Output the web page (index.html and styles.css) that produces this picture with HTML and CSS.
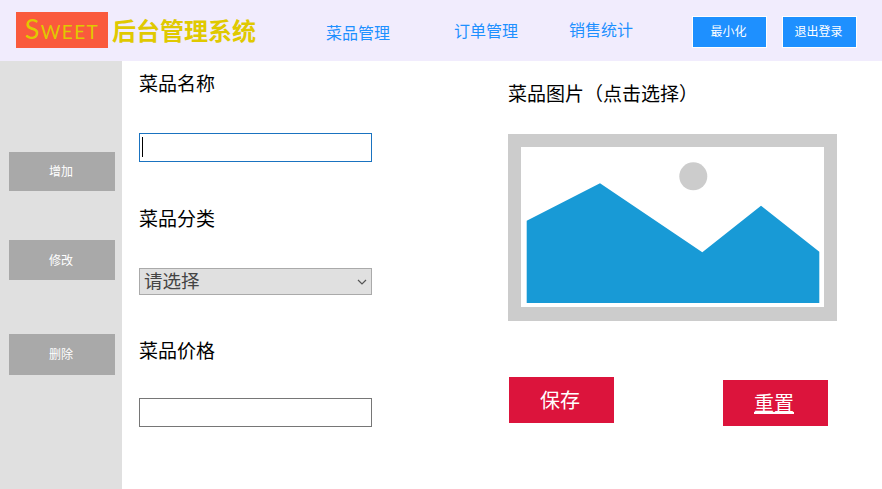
FILE: index.html
```html
<!DOCTYPE html>
<html lang="zh">
<head>
    <meta charset="UTF-8">
    <meta name="viewport" content="width=device-width, initial-scale=1.0">
    <title>后台管理系统</title>
    <link rel="stylesheet" href="styles.css">
</head>
<body>
    <!-- Top bar -->
    <header class="topbar">
        <div class="logo">Sweet</div>
        <div class="system-name">后台管理系统</div>
        <nav class="nav">
            <a class="nav-item nav-item-first" href="#">菜品管理</a>
            <a class="nav-item nav-item-second" href="#">订单管理</a>
            <a class="nav-item nav-item-third" href="#">销售统计</a>
        </nav>
        <div class="top-actions">
            <button class="top-btn">最小化</button>
            <button class="top-btn">退出登录</button>
        </div>
    </header>

    <div class="content">
        <!-- Side menu -->
        <aside class="sidebar">
            <button class="side-btn side-add">增加</button>
            <button class="side-btn side-edit">修改</button>
            <button class="side-btn side-del">删除</button>
        </aside>

        <!-- Dish form -->
        <main class="form-area">
            <section class="fields">
                <div class="field-label label-name">菜品名称</div>
                <div class="input-wrap">
                    <input class="text-input is-focused" type="text">
                    <span class="caret"></span>
                </div>
                <div class="field-label label-type">菜品分类</div>
                <div class="select-wrap">
                    <select class="type-select">
                        <option>请选择</option>
                    </select>
                    <svg class="select-arrow" width="10" height="6" viewBox="0 0 10 6">
                        <polyline points="1,1 5,5 9,1" fill="none" stroke="#555" stroke-width="1.2"/>
                    </svg>
                </div>
                <div class="field-label label-price">菜品价格</div>
                <input class="text-input" type="text">
            </section>

            <section class="picture">
                <div class="field-label picture-label">菜品图片（点击选择）</div>
                <svg class="picture-img" width="329" height="187" viewBox="0 0 329 187">
                    <rect width="329" height="187" fill="#cccccc"/>
                    <rect x="13" y="13" width="303" height="160" fill="#ffffff"/>
                    <circle cx="185.3" cy="42.3" r="14" fill="#cccccc"/>
                    <polygon points="18.7,86.7 92,49.3 194.3,118.3 253,71.7 311.3,117.7 311.3,169 18.7,169" fill="#189ad6"/>
                </svg>
                <div class="picture-actions">
                    <button class="red-btn">保存</button>
                    <a class="red-btn red-link" href="#">重置</a>
                </div>
            </section>
        </main>
    </div>
</body>
</html>
```

FILE: styles.css
```css
* {
    box-sizing: border-box;
}
body {
    margin: 0;
    height: 489px;
    overflow: hidden;
    background: #fff;
    font-family: "Noto Sans CJK SC", "Noto Sans", sans-serif;
}
button {
    font-family: inherit;
    cursor: pointer;
}

/* Top bar */
.topbar {
    display: flex;
    height: 61px;
    background: #f1ecfd;
}
.logo {
    flex-shrink: 0;
    width: 92px;
    height: 36px;
    margin: 12px 0 0 16px;
    background: #fa5a3c;
    color: #e0c900;
    font-family: "Lato", sans-serif;
    font-variant: small-caps;
    font-size: 27px;
    line-height: 34px;
    letter-spacing: 1.4px;
    text-align: center;
}
.system-name {
    margin: 12px 0 0 4px;
    color: #e0c900;
    font-size: 24px;
    font-weight: bold;
    line-height: 35px;
    white-space: nowrap;
}
.nav {
    display: flex;
    margin-left: 70px;
}
.nav-item {
    color: #1e90ff;
    font-size: 16px;
    line-height: 24px;
    text-decoration: none;
    white-space: nowrap;
}
.nav-item-first {
    margin-top: 20px;
}
.nav-item-second {
    margin: 18px 0 0 64px;
}
.nav-item-third {
    margin: 17px 0 0 51px;
}
.top-actions {
    display: flex;
    flex-shrink: 0;
    gap: 15px;
    margin: 16px 0 0 59px;
}
.top-btn {
    flex-shrink: 0;
    width: 75px;
    height: 32px;
    padding: 0 2px 3px 0;
    border: 1px solid #fff;
    background: #1e90ff;
    color: #fff;
    font-size: 12px;
}

/* Side menu */
.content {
    display: flex;
    height: 428px;
}
.sidebar {
    display: flex;
    flex-direction: column;
    align-items: center;
    flex-shrink: 0;
    width: 122px;
    padding: 91px 0 0 2px;
    background: #e0e0e0;
}
.side-btn {
    width: 106px;
    padding: 0 2px 2px 0;
    border: none;
    background: #a9a9a9;
    color: #fff;
    font-size: 12px;
}
.side-add {
    height: 39px;
}
.side-edit {
    height: 40px;
    margin-top: 49px;
}
.side-del {
    height: 41px;
    margin-top: 54px;
}

/* Dish form */
.form-area {
    display: flex;
    flex: 1;
}
.fields {
    width: 233px;
    margin-left: 17px;
}
.field-label {
    color: #000;
    font-size: 19px;
    line-height: 28px;
    white-space: nowrap;
}
.label-name {
    margin-top: 8px;
    margin-bottom: 36px;
}
.label-type {
    margin-top: 42px;
    margin-bottom: 36px;
}
.label-price {
    margin-top: 41px;
    margin-bottom: 34px;
}
.input-wrap {
    position: relative;
    height: 29px;
}
.text-input {
    display: block;
    width: 233px;
    height: 29px;
    padding: 0 2px;
    border: 1px solid #767676;
    border-radius: 0;
    background: #fff;
    outline: none;
}
.is-focused {
    border-color: #1a73c0;
}
.caret {
    position: absolute;
    top: 4px;
    left: 3px;
    width: 1px;
    height: 20px;
    background: #000;
}
.select-wrap {
    position: relative;
    height: 27px;
}
.type-select {
    display: block;
    width: 233px;
    height: 27px;
    padding: 0 0 3px 4px;
    border: 1px solid #aaa;
    border-radius: 0;
    background-color: #e0e0e0;
    color: #444;
    font-family: inherit;
    font-size: 18.5px;
    line-height: 23px;
    appearance: none;
}
.select-arrow {
    position: absolute;
    top: 11px;
    right: 5px;
}

/* Picture column */
.picture {
    width: 329px;
    margin-left: 136px;
}
.picture-label {
    margin-top: 18px;
    margin-bottom: 27px;
}
.picture-img {
    display: block;
}
.picture-actions {
    display: flex;
    justify-content: space-between;
    align-items: flex-start;
    width: 319px;
    margin: 56px 0 0 1px;
}
.red-btn {
    display: block;
    width: 105px;
    height: 46px;
    padding: 0 3px 0 0;
    border: none;
    background: #dc143c;
    color: #fff;
    font-size: 20px;
    line-height: 46px;
    text-align: center;
}
.red-link {
    margin-top: 3px;
    text-decoration: underline;
}
```
